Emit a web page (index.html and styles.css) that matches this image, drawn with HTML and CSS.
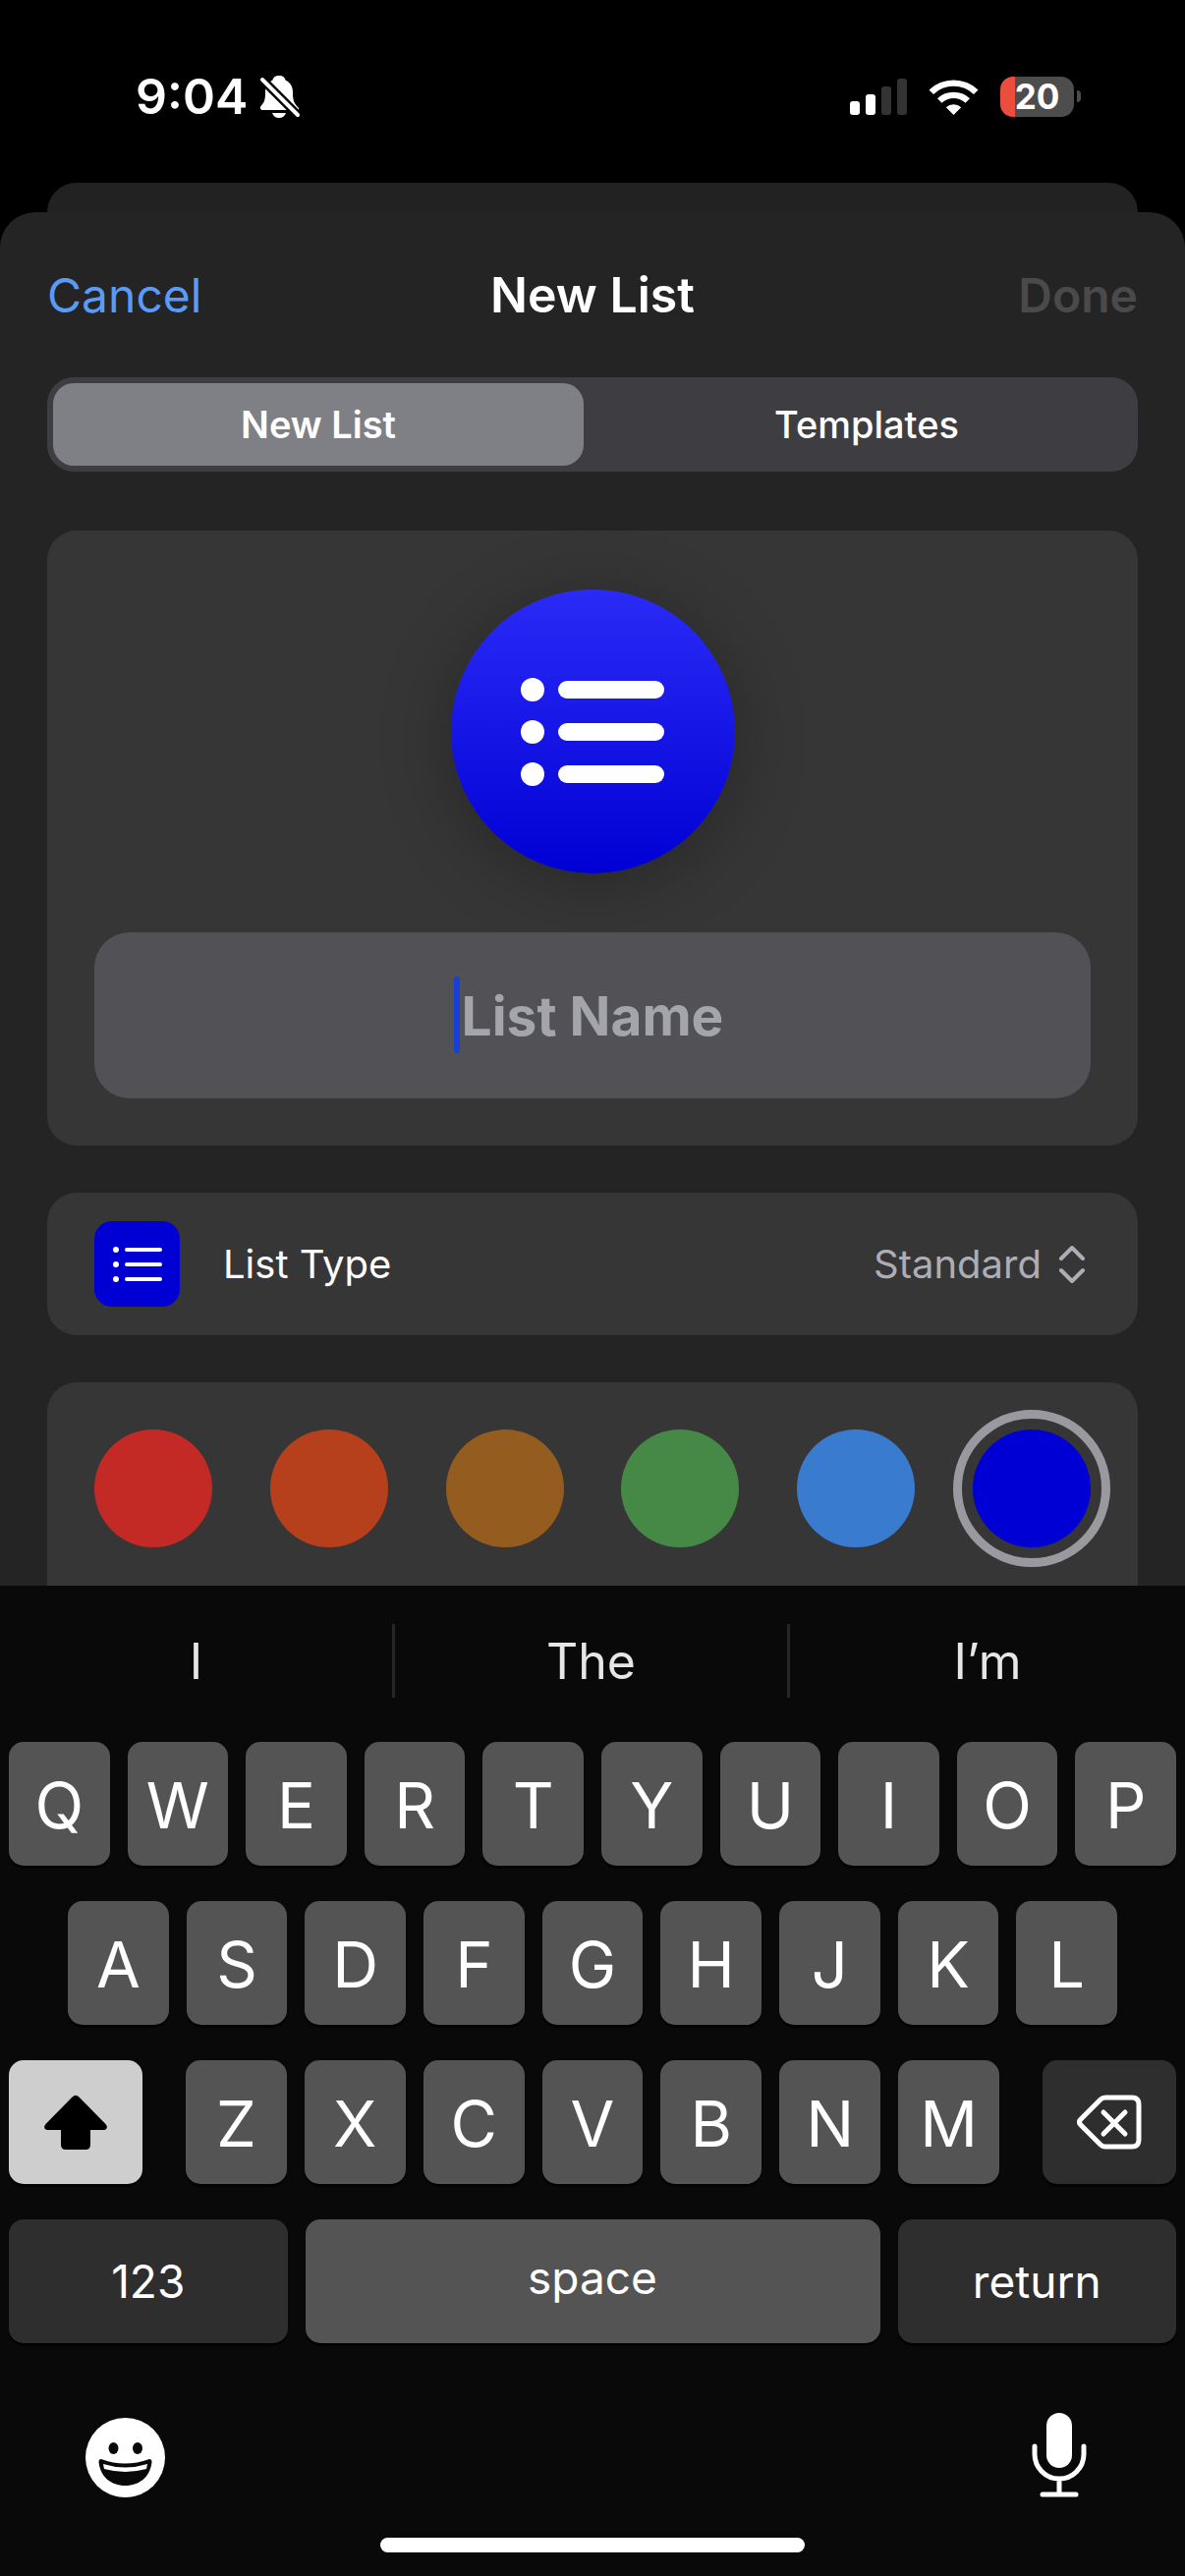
FILE: index.html
```html
<!DOCTYPE html>
<html lang="en">
<head>
<meta charset="utf-8">
<meta name="viewport" content="width=device-width, initial-scale=1">
<title>New List</title>
<link rel="stylesheet" href="styles.css">
</head>
<body>
<div class="status-bar">
  <div class="status-left">
    <time class="clock">9:04</time>
    <svg class="bell" viewBox="0 0 42 44" role="img" aria-label="Silent mode">
      <path fill="#fff" d="M20 1c4 0 6 2 6.500 4.500C31.500 8 34 12 34 18c0 8 1 11 6 16v2H4c-3 0-4-2-2.500-4C5 28 6 26 6 18 6 12 8.500 8 13.500 5.500 14 3 16 1 20 1zM13 39h14c-1 3-3.500 5-7 5s-6-2-7-5z"/>
      <path stroke="#000" stroke-width="9" d="M-1 1 42 44"/>
      <path stroke="#fff" stroke-width="4" stroke-linecap="round" d="M3 5 39 41"/>
    </svg>
  </div>
  <div class="status-right">
    <svg class="signal" viewBox="0 0 58 38" role="img" aria-label="Signal, two bars">
      <rect x="0" y="24" width="10" height="14" rx="3" fill="#fff"/>
      <rect x="16" y="17" width="10" height="21" rx="3" fill="#fff"/>
      <rect x="32" y="9" width="10" height="29" rx="3" fill="#333"/>
      <rect x="48" y="1" width="10" height="37" rx="3" fill="#333"/>
    </svg>
    <svg class="wifi" viewBox="0 0 51 38" role="img" aria-label="Wi-Fi">
      <path fill="#fff" d="M.500 12.500a36 36 0 0 1 50 0l-4.500 4.500a29.500 29.500 0 0 0-41 0zM9 21.200a24 24 0 0 1 33 0l-4.500 4.600a17.500 17.500 0 0 0-24 0zM17.800 30.200a11.500 11.500 0 0 1 15.400 0L25.500 38z"/>
    </svg>
    <div class="battery"><span class="battery-level">20</span></div>
  </div>
</div>

<div class="sheet-behind"></div>
<main class="sheet">
  <header class="nav">
    <button class="nav-button cancel" type="button">Cancel</button>
    <h1 class="nav-title">New List</h1>
    <button class="nav-button done" type="button" disabled>Done</button>
  </header>

  <div class="segments" role="tablist">
    <button class="segment selected" type="button" role="tab" aria-selected="true">New List</button>
    <button class="segment" type="button" role="tab" aria-selected="false">Templates</button>
  </div>

  <section class="card name-card">
    <div class="badge">
      <svg class="badge-icon" viewBox="0 0 147 110" aria-hidden="true">
        <g fill="#fff">
          <circle cx="12" cy="12" r="12"/><rect x="38" y="3" width="108" height="18" rx="9"/>
          <circle cx="12" cy="55" r="12"/><rect x="38" y="46" width="108" height="18" rx="9"/>
          <circle cx="12" cy="98" r="12"/><rect x="38" y="89" width="108" height="18" rx="9"/>
        </g>
      </svg>
    </div>
    <div class="name-field">
      <input class="name-input" type="text" placeholder="List Name" aria-label="List Name">
      <span class="caret"></span>
    </div>
  </section>

  <section class="card type-card">
    <span class="type-icon">
      <svg viewBox="0 0 50 38" width="50" height="38" aria-hidden="true">
        <g fill="#fff">
          <circle cx="3" cy="4" r="3"/><rect x="12" y="2" width="38" height="4" rx="2"/>
          <circle cx="3" cy="19" r="3"/><rect x="12" y="17" width="38" height="4" rx="2"/>
          <circle cx="3" cy="34" r="3"/><rect x="12" y="32" width="38" height="4" rx="2"/>
        </g>
      </svg>
    </span>
    <label class="type-label" for="list-type">List Type</label>
    <select class="type-select" id="list-type"><option>Standard</option></select>
    <svg class="chevrons" viewBox="0 0 28 40" aria-hidden="true">
      <path fill="none" stroke="#aeadb6" stroke-width="4" stroke-linecap="round" stroke-linejoin="round" d="M3 14 14 3l11 11M3 26l11 11 11-11"/>
    </svg>
  </section>

  <section class="card color-card">
    <input class="swatch red" type="radio" name="color" aria-label="Red">
    <input class="swatch orange" type="radio" name="color" aria-label="Orange">
    <input class="swatch brown" type="radio" name="color" aria-label="Brown">
    <input class="swatch green" type="radio" name="color" aria-label="Green">
    <input class="swatch sky" type="radio" name="color" aria-label="Light blue">
    <input class="swatch blue" type="radio" name="color" aria-label="Blue" checked>
  </section>
</main>

<div class="keyboard">
  <div class="suggestions">
    <button class="suggestion" type="button">I</button>
    <button class="suggestion" type="button">The</button>
    <button class="suggestion" type="button">I’m</button>
  </div>
  <div class="rows">
    <div class="row">
      <button class="key" type="button">Q</button><button class="key" type="button">W</button><button class="key" type="button">E</button><button class="key" type="button">R</button><button class="key" type="button">T</button><button class="key" type="button">Y</button><button class="key" type="button">U</button><button class="key" type="button">I</button><button class="key" type="button">O</button><button class="key" type="button">P</button>
    </div>
    <div class="row row-middle">
      <button class="key" type="button">A</button><button class="key" type="button">S</button><button class="key" type="button">D</button><button class="key" type="button">F</button><button class="key" type="button">G</button><button class="key" type="button">H</button><button class="key" type="button">J</button><button class="key" type="button">K</button><button class="key" type="button">L</button>
    </div>
    <div class="row row-lower">
      <button class="key key-side key-shift" type="button" aria-label="Shift">
        <svg viewBox="0 0 64 56" width="64" height="56" aria-hidden="true">
          <path fill="#000" d="M28.500 2.500q3.500-3.500 7 0L62.500 30q2 2.500 1 4.500-1 1.500-3 1.500H47v15q0 5-5 5H22q-5 0-5-5V36H4q-2.500 0-3.500-1.500-1-2 1-4.500z"/>
        </svg>
      </button>
      <div class="row row-letters">
        <button class="key" type="button">Z</button><button class="key" type="button">X</button><button class="key" type="button">C</button><button class="key" type="button">V</button><button class="key" type="button">B</button><button class="key" type="button">N</button><button class="key" type="button">M</button>
      </div>
      <button class="key key-side key-dark" type="button" aria-label="Delete">
        <svg viewBox="0 0 66 56" width="66" height="56" aria-hidden="true">
          <g fill="none" stroke="#fff" stroke-width="5" stroke-linecap="round" stroke-linejoin="round">
            <path d="M29 3h27q7 0 7 7v36q0 7-7 7H29q-3 0-5-2L4 31q-3-3 0-6L24 5q2-2 5-2z"/>
            <path d="M27 18l22 22M49 18 27 40"/>
          </g>
        </svg>
      </button>
    </div>
    <div class="row">
      <button class="key key-dark key-wide" type="button">123</button>
      <button class="key key-space" type="button">space</button>
      <button class="key key-dark key-wide" type="button">return</button>
    </div>
  </div>
  <div class="tools">
    <button class="tool" type="button" aria-label="Emoji">
      <svg viewBox="0 0 81 81" width="81" height="81" aria-hidden="true">
        <circle cx="40.500" cy="40.500" r="40.500" fill="#fff"/>
        <g fill="#090909">
          <ellipse cx="28.500" cy="31" rx="5" ry="6"/><ellipse cx="53" cy="31" rx="5" ry="6"/>
          <path d="M16 42q24 9 49 0 2.500 0 2.500 3C66 60 55 69 40.500 69S15 60 13.500 45q0-3 2.500-3z"/>
        </g>
        <path fill="#fff" d="M18 47q22.500 7 45 0l-1 5q-21.500 6-43 0z"/>
      </svg>
    </button>
    <button class="tool" type="button" aria-label="Dictate">
      <svg viewBox="0 0 56 86" width="56" height="86" aria-hidden="true">
        <rect x="15" y="0" width="26" height="56" rx="13" fill="#fff"/>
        <path fill="none" stroke="#fff" stroke-width="5" stroke-linecap="round" d="M3 34v8a25 25 0 0 0 50 0v-8M28 68v13M11 83h34"/>
      </svg>
    </button>
  </div>
  <div class="home-indicator"></div>
</div>
</body>
</html>
```

FILE: styles.css
```css
* {
  box-sizing: border-box;
}

body {
  margin: 0;
  min-height: 100vh;
  display: flex;
  flex-direction: column;
  background: #000;
  color: #fff;
  font-family: Inter, "Liberation Sans", sans-serif;
}

button,
input,
select {
  margin: 0;
  padding: 0;
  border: 0;
  background: none;
  color: inherit;
  font: inherit;
  appearance: none;
}

svg {
  display: block;
  flex: none;
}

/* Status bar */
.status-bar {
  display: flex;
  justify-content: space-between;
  height: 186px;
  padding: 68px 106px 0 138px;
}

.status-left,
.status-right {
  display: flex;
  align-items: center;
  height: 60px;
}

.status-left {
  gap: 12px;
}

.status-right {
  gap: 22px;
}

.clock {
  font-size: 50px;
  font-weight: 600;
}

.bell {
  width: 42px;
  height: 44px;
}

.signal {
  width: 58px;
  height: 38px;
}

.wifi {
  width: 51px;
  height: 38px;
}

.battery {
  display: flex;
  align-items: center;
  gap: 3px;
}

.battery::after {
  content: "";
  width: 4px;
  height: 12px;
  border-radius: 0 4px 4px 0;
  background: #4d4d4d;
}

.battery-level {
  width: 75px;
  border-radius: 13px;
  background: linear-gradient(to right, #eb4e3d 15px, #4d4d4d 15px);
  font-size: 35px;
  font-weight: 700;
  line-height: 41px;
  text-align: center;
}

/* Sheet */
.sheet-behind {
  height: 30px;
  margin: 0 48px;
  border-radius: 30px 30px 0 0;
  background: #222;
}

.sheet {
  flex: 1;
  display: flex;
  flex-direction: column;
  padding: 0 48px;
  border-radius: 36px 36px 0 0;
  background: #242424;
}

.nav {
  display: grid;
  grid-template-columns: 1fr auto 1fr;
  align-items: center;
  height: 168px;
}

.nav-title {
  margin: 0;
  font-size: 50px;
  font-weight: 600;
}

.nav-button {
  font-size: 48px;
  font-weight: 600;
}

.cancel {
  justify-self: start;
  color: #5a9bf8;
  font-weight: 400;
}

.done {
  justify-self: end;
  color: #4a4a4a;
}

.segments {
  display: grid;
  grid-template-columns: 1fr 1fr;
  gap: 18px;
  height: 96px;
  padding: 6px;
  border-radius: 27px;
  background: #3e3d42;
}

.segment {
  border-radius: 21px;
  font-size: 38px;
  font-weight: 500;
}

.selected {
  background: #7f8085;
  font-weight: 600;
}

.card {
  margin-top: 48px;
  border-radius: 30px;
  background: #363636;
}

.name-card {
  display: flex;
  flex-direction: column;
  align-items: center;
  gap: 60px;
  margin-top: 60px;
  padding: 60px 48px 48px;
}

.badge {
  display: grid;
  place-items: center;
  width: 289px;
  height: 289px;
  border-radius: 50%;
  background: linear-gradient(#2b2bf8, #0000d4);
  box-shadow: 0 9px 72px rgba(0, 0, 0, 0.28);
}

.badge-icon {
  width: 147px;
  height: 110px;
}

.name-field {
  position: relative;
  width: 100%;
}

.name-input {
  display: block;
  width: 100%;
  height: 169px;
  border-radius: 36px;
  background: #525156;
  font-size: 55px;
  font-weight: 700;
  text-align: center;
}

.name-input::placeholder {
  color: #a4a5ab;
  opacity: 1;
}

.caret {
  position: absolute;
  top: 45px;
  left: calc(50% - 141px);
  width: 6px;
  height: 78px;
  border-radius: 3px;
  background: #1740d8;
}

.type-card {
  display: flex;
  align-items: center;
  height: 145px;
  padding: 0 53px 0 48px;
}

.type-icon {
  display: grid;
  place-items: center;
  width: 87px;
  height: 87px;
  border-radius: 18px;
  background: #0000d4;
}

.type-label {
  flex: 1;
  margin-left: 44px;
  font-size: 40px;
}

.type-select {
  color: #aeadb6;
  font-size: 40px;
}

.chevrons {
  width: 28px;
  height: 40px;
  margin-left: 17px;
}

.color-card {
  flex: 1;
  display: flex;
  justify-content: space-between;
  align-items: flex-start;
  min-height: 207px;
  padding: 48px 48px 0;
  border-radius: 30px 30px 0 0;
}

.swatch {
  width: 120px;
  height: 120px;
  border-radius: 50%;
}

.swatch:checked {
  outline: 9px solid #9a99a0;
  outline-offset: 11px;
}

.red { background: #c32a25; }
.orange { background: #b7401c; }
.brown { background: #945c1e; }
.green { background: #468946; }
.sky { background: #397bcf; }
.blue { background: #0000d4; }

/* Keyboard */
.keyboard {
  background: #090909;
}

.suggestions {
  display: grid;
  grid-template-columns: 1fr 1fr 1fr;
  padding: 39px 0 45px;
}

.suggestion {
  height: 75px;
  color: #e6e6e6;
  font-size: 50px;
}

.suggestion:not(:last-child) {
  border-right: 3px solid #262626;
}

.rows {
  display: grid;
  gap: 36px;
  padding: 0 9px;
}

.row {
  display: flex;
  gap: 18px;
}

.row-middle {
  padding: 0 60px;
}

.row-lower {
  gap: 44px;
}

.row-letters {
  flex: 1;
}

.key {
  display: flex;
  flex: 1 1 0;
  align-items: center;
  justify-content: center;
  min-width: 0;
  height: 126px;
  padding-top: 2px;
  border-radius: 15px;
  background: #545454;
  box-shadow: 0 3px 0 #030303;
  font-size: 65px;
}

.key-side {
  flex: 0 0 136px;
  padding-top: 0;
}

.key-shift {
  background: #cecece;
}

.key-dark {
  background: #2e2e2e;
}

.key-wide {
  flex: 283 1 0;
  padding-top: 0;
  font-size: 46px;
}

.key-space {
  flex: 584 1 0;
  padding: 0 0 8px;
  font-size: 46px;
}

.tools {
  display: flex;
  justify-content: space-between;
  align-items: flex-end;
  padding: 71px 100px 0 87px;
}

.home-indicator {
  width: 432px;
  height: 15px;
  margin: 41px auto 0;
  border-radius: 8px;
  background: #fff;
}

.keyboard::after {
  content: "";
  display: block;
  height: 24px;
}
```
